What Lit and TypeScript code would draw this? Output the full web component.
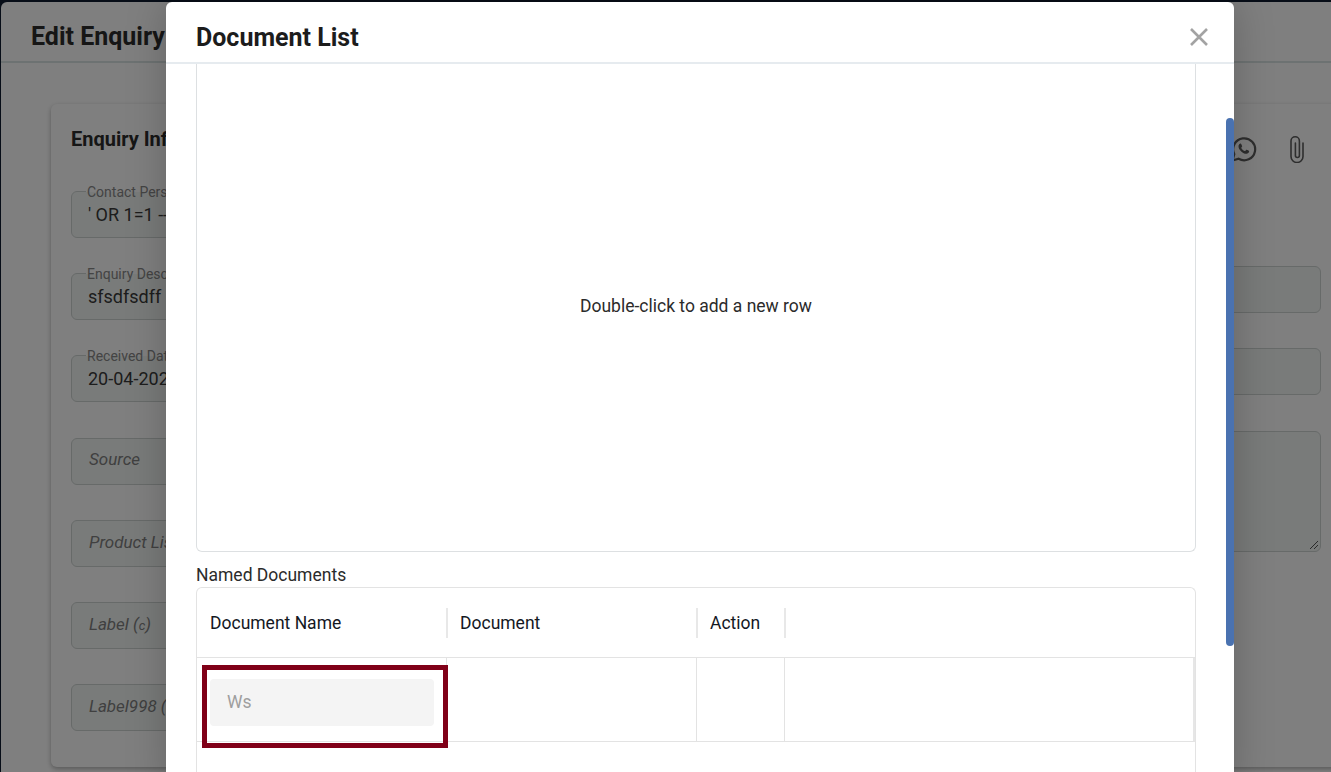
import { LitElement, html, css, svg } from "lit";
import { customElement } from "lit/decorators.js";

const whatsapp = svg`<svg class="ico" viewBox="0 0 26 26" width="26" height="26" fill="none" stroke="currentColor"><path stroke-width="2.200" d="M1.500 24.500l1.800-6.300A11 11 0 1 1 7.600 22.800z"/><path stroke="none" fill="currentColor" d="M9.600 7.500c-.4 0-.9.200-1.200.6-.4.500-.9 1.200-.9 2.300 0 1.700 1.100 3.100 1.300 3.400.5.700 1.900 2.700 4.300 3.600 1.300.5 2.300.5 3 .3.800-.2 1.700-.9 1.900-1.600.1-.4.200-1 .1-1.200-.1-.2-1.900-1.100-2.300-1.200-.4-.1-.5-.1-.7.200l-.9 1c-.2.200-.4.200-.6.100-1.600-.7-2.600-1.800-3.300-3-.2-.3 0-.4.100-.5l.7-.9c.1-.2.100-.4 0-.5l-.9-2.200c-.2-.4-.4-.4-.6-.4z"/></svg>`;
const clip = svg`<svg class="ico" viewBox="0 0 16 28" width="16" height="28" fill="none" stroke="currentColor" stroke-width="1.600" stroke-linecap="round"><path d="M14 8v13.500a6 6 0 0 1-12 0V6a4.200 4.200 0 0 1 8.400 0v14.500a2 2 0 0 1-4 0V8"/></svg>`;

@customElement("app-root")
export class AppRoot extends LitElement {
  static styles = css`
    :host { display: block; position: relative; width: 1331px; height: 772px; overflow: hidden; font-family: Roboto, "Noto Sans", sans-serif; background: #0e1a2e; color: #212529; }
    * { box-sizing: border-box; }

    .page { position: absolute; inset: 2px 0 0 1px; background: #ffffff; border-radius: 6px 0 0 0; display: flex; flex-direction: column; overflow: hidden; }
    .page-head { height: 61px; flex: none; padding: 11px 30px 0; display: flex; align-items: center; border-bottom: 2px solid #dae4e4; }
    .page-head h1 { margin: 0; font-size: 25px; line-height: 28px; font-weight: 700; color: #2c2c2c; }
    .page-body { flex: 1; padding: 41px 0 0 50px; }
    .card { height: 663px; margin-right: -40px; border-radius: 6px; background: #fff; box-shadow: 0 2px 5px rgba(0,0,0,.3); padding: 23px 50px 0 20px; display: grid; grid-template-columns: 500px 1fr; }
    .card h2 { margin: 0; font-size: 20px; line-height: 24px; font-weight: 700; color: #2c2c2c; }
    .left { display: flex; flex-direction: column; }
    .fields { margin-top: 40px; display: flex; flex-direction: column; }
    .field { width: 400px; border: 1px solid #ced4d2; border-radius: 6px; position: relative; flex: none; height: 47px; margin-bottom: 35px; background: #f3f7f5; }
    .float { padding: 13px 16px 0; font-size: 18px; line-height: 20px; color: #3a3a3a; }
    .float label { position: absolute; left: 14px; top: -8px; font-size: 14px; line-height: 16px; padding: 0 1px; background: linear-gradient(to bottom, #fff 50%, #f3f7f5 50%); color: #888; }
    .empty { padding: 0 17px; line-height: 42px; font-size: 17px; font-style: italic; color: #808080; }
    .small { font-size: 13px; }
    .first { margin-top: 1px; line-height: 40px; }
    .right { display: flex; flex-direction: column; align-items: flex-end; }
    .icons { display: flex; align-items: center; gap: 32px; height: 32px; margin-top: 6px; margin-right: 16px; color: #5c5c5c; }
    .ico { display: block; }
    .box { width: 500px; border: 1px solid #ced4d2; border-radius: 6px; flex: none; background: #f3f7f5; }
    .b1 { height: 47px; margin-top: 101px; }
    .b2 { height: 47px; margin-top: 35px; }
    .b3 { height: 121px; margin-top: 36px; position: relative; }
    .grip { position: absolute; right: 1px; bottom: 1px; display: block; color: #555; }

    .backdrop { position: absolute; inset: 0; background: rgba(0,0,0,.5); }

    .modal { position: absolute; left: 166px; top: 2px; width: 1068px; height: 790px; background: #fff; border-radius: 6px 6px 0 0; box-shadow: 0 0 40px rgba(0,0,0,.22); display: flex; flex-direction: column; overflow: hidden; }
    .modal-head { height: 62px; flex: none; display: flex; align-items: center; justify-content: space-between; padding: 12px 25px 0 30px; border-bottom: 2px solid #e6ebef; }
    .modal-head h3 { margin: 0; font-size: 25px; line-height: 28px; font-weight: 700; color: #1c1c1c; }
    .close { display: block; color: #a3a3a3; margin-top: -2px; }
    .modal-body { flex: 1; padding: 0 38px 0 30px; display: flex; flex-direction: column; overflow: hidden; }
    .panel { height: 488px; flex: none; border: 1px solid #dde0e2; border-top: 0; border-radius: 0 0 6px 6px; display: flex; align-items: center; justify-content: center; font-size: 17.500px; line-height: 22px; color: #2b2b2b; }
    .panel span { transform: translateY(-2px); }
    .named { margin-top: 12px; font-size: 17.500px; line-height: 22px; color: #2b2b2b; height: 22px; flex: none; }
    .table { margin-top: 1px; flex: 1; border: 1px solid #e3e3e3; border-bottom: 0; border-radius: 6px 6px 0 0; }
    .row { display: grid; grid-template-columns: 250px 250px 88px 1fr; }
    .thead { height: 70px; border-bottom: 1px solid #e3e3e3; align-items: center; }
    .th { height: 30px; margin-right: -1px; padding-left: 13px; font-size: 17.500px; line-height: 30px; color: #14181f; border-right: 2px solid #e8e8e8; }
    .th.last { border-right: 0; }
    .tbody { height: 84px; border-bottom: 1px solid #e3e3e3; border-right: 2px solid #e6e6e6; }
    .td { border-right: 1px solid #e3e3e3; }
    .td.last { border-right: 0; }
    .td.name { padding: 21px 12px 0 13px; }
    .input { height: 47px; background: #f4f4f4; border-radius: 4px; padding: 0 17px; font-size: 17.500px; line-height: 46px; color: #9e9e9e; }

    .mark { position: absolute; left: 202px; top: 665px; width: 246px; height: 83px; border: 5px solid #800018; }
    .thumb { position: absolute; left: 1226px; top: 118px; width: 8px; height: 528px; background: #4a72b0; border-radius: 4px; }
  `;

  render() {
    return html`
      <div class="page">
        <div class="page-head"><h1>Edit Enquiry</h1></div>
        <div class="page-body">
          <div class="card">
            <div class="left">
              <h2>Enquiry Information</h2>
              <div class="fields">
                <div class="field float"><label>Contact Person</label>' OR 1=1 --</div>
                <div class="field float"><label>Enquiry Description</label>sfsdfsdff</div>
                <div class="field float"><label>Received Date</label>20-04-2024</div>
                <div class="field empty first">Source</div>
                <div class="field empty">Product List</div>
                <div class="field empty">Label (<span class="small">c</span>)</div>
                <div class="field empty">Label998 (a)</div>
              </div>
            </div>
            <div class="right">
              <div class="icons">${whatsapp}${clip}</div>
              <div class="box b1"></div>
              <div class="box b2"></div>
              <div class="box b3">
                <svg class="grip" width="10" height="10" viewBox="0 0 10 10" fill="none" stroke="currentColor"><path d="M1 9L9 1M5 9l4-4"/></svg>
              </div>
            </div>
          </div>
        </div>
      </div>
      <div class="backdrop"></div>
      <div class="modal">
        <div class="modal-head">
          <h3>Document List</h3>
          <svg class="close" width="20" height="20" viewBox="0 0 20 20" fill="none" stroke="currentColor" stroke-width="2.600"><path d="M2 2l16 16M18 2L2 18"/></svg>
        </div>
        <div class="modal-body">
          <div class="panel"><span>Double-click to add a new row</span></div>
          <div class="named">Named Documents</div>
          <div class="table">
            <div class="row thead">
              <div class="th">Document Name</div>
              <div class="th">Document</div>
              <div class="th">Action</div>
              <div class="th last"></div>
            </div>
            <div class="row tbody">
              <div class="td name"><div class="input">Ws</div></div>
              <div class="td"></div>
              <div class="td"></div>
              <div class="td last"></div>
            </div>
          </div>
        </div>
      </div>
      <div class="thumb"></div>
      <div class="mark"></div>
    `;
  }
}
